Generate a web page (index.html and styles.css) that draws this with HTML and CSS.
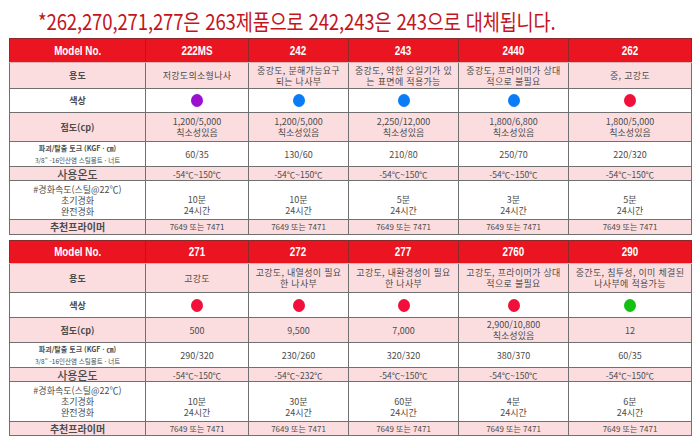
FILE: index.html
```html
<!DOCTYPE html>
<html lang="ko">
<head>
<meta charset="utf-8">
<link rel="stylesheet" href="styles.css">
</head>
<body>
<div class="page">
  <div class="title"><span class="title-text">*262,270,271,277은 263제품으로 242,243은 243으로 대체됩니다.</span></div>

  <table class="spec">
    <colgroup>
      <col class="c1"><col class="c2"><col class="c3"><col class="c4"><col class="c5"><col class="c6">
    </colgroup>
    <tr class="r-head">
      <th><span class="cond">Model No.</span></th>
      <th><span class="cond">222MS</span></th>
      <th><span class="cond">242</span></th>
      <th><span class="cond">243</span></th>
      <th><span class="cond">2440</span></th>
      <th><span class="cond">262</span></th>
    </tr>
    <tr class="r-use pink">
      <td class="lab">용도</td>
      <td>저강도의소형나사</td>
      <td>중강도, 분해가능요구<br>되는 나사부</td>
      <td>중강도, 약한 오일기가 있<br>는 표면에 적용가능</td>
      <td>중강도, 프라이머가 상대<br>적으로 불필요</td>
      <td>중, 고강도</td>
    </tr>
    <tr class="r-color">
      <td class="lab">색상</td>
      <td><span class="dot purple"></span></td>
      <td><span class="dot blue"></span></td>
      <td><span class="dot blue"></span></td>
      <td><span class="dot blue"></span></td>
      <td><span class="dot red"></span></td>
    </tr>
    <tr class="r-visc pink">
      <td class="lab lab-visc">점도(cp)</td>
      <td>1,200/5,000<br>칙소성있음</td>
      <td>1,200/5,000<br>칙소성있음</td>
      <td>2,250/12,000<br>칙소성있음</td>
      <td>1,800/6,800<br>칙소성있음</td>
      <td>1,800/5,000<br>칙소성있음</td>
    </tr>
    <tr class="r-torque">
      <td class="lab lab-torque"><span class="t1">파괴/탈출 토크 (KGF · ㎝)</span><br><span class="t2">3/8" -16인산염 스틸볼트 · 너트</span></td>
      <td>60/35</td>
      <td>130/60</td>
      <td>210/80</td>
      <td>250/70</td>
      <td>220/320</td>
    </tr>
    <tr class="r-temp pink">
      <td class="lab lab-temp">사용온도</td>
      <td>-54℃~150℃</td>
      <td>-54℃~150℃</td>
      <td>-54℃~150℃</td>
      <td>-54℃~150℃</td>
      <td>-54℃~150℃</td>
    </tr>
    <tr class="r-cure">
      <td class="lab lab-cure">#경화속도(스틸@22℃)<br>초기경화<br>완전경화</td>
      <td class="cure">10분<br>24시간</td>
      <td class="cure">10분<br>24시간</td>
      <td class="cure">5분<br>24시간</td>
      <td class="cure">3분<br>24시간</td>
      <td class="cure">5분<br>24시간</td>
    </tr>
    <tr class="r-primer pink">
      <td class="lab lab-primer">추천프라이머</td>
      <td>7649 또는 7471</td>
      <td>7649 또는 7471</td>
      <td>7649 또는 7471</td>
      <td>7649 또는 7471</td>
      <td>7649 또는 7471</td>
    </tr>
  </table>

  <table class="spec second">
    <colgroup>
      <col class="c1"><col class="c2"><col class="c3"><col class="c4"><col class="c5"><col class="c6">
    </colgroup>
    <tr class="r-head">
      <th><span class="cond">Model No.</span></th>
      <th><span class="cond">271</span></th>
      <th><span class="cond">272</span></th>
      <th><span class="cond">277</span></th>
      <th><span class="cond">2760</span></th>
      <th><span class="cond">290</span></th>
    </tr>
    <tr class="r-use2 pink">
      <td class="lab">용도</td>
      <td>고강도</td>
      <td>고강도, 내열성이 필요<br>한 나사부</td>
      <td>고강도, 내환경성이 필요<br>한 나사부</td>
      <td>고강도, 프라이머가 상대<br>적으로 불필요</td>
      <td>중간도, 침투성, 이미 체결된<br>나사부에 적용가능</td>
    </tr>
    <tr class="r-color2">
      <td class="lab">색상</td>
      <td><span class="dot red"></span></td>
      <td><span class="dot red"></span></td>
      <td><span class="dot red"></span></td>
      <td><span class="dot red"></span></td>
      <td><span class="dot green"></span></td>
    </tr>
    <tr class="r-visc2 pink">
      <td class="lab lab-visc">점도(cp)</td>
      <td>500</td>
      <td>9,500</td>
      <td>7,000</td>
      <td>2,900/10,800<br>칙소성있음</td>
      <td>12</td>
    </tr>
    <tr class="r-torque2">
      <td class="lab lab-torque"><span class="t1">파괴/탈출 토크 (KGF · ㎝)</span><br><span class="t2">3/8" -16인산염 스틸볼트 · 너트</span></td>
      <td>290/320</td>
      <td>230/260</td>
      <td>320/320</td>
      <td>380/370</td>
      <td>60/35</td>
    </tr>
    <tr class="r-temp pink">
      <td class="lab lab-temp">사용온도</td>
      <td>-54℃~150℃</td>
      <td>-54℃~232℃</td>
      <td>-54℃~150℃</td>
      <td>-54℃~150℃</td>
      <td>-54℃~150℃</td>
    </tr>
    <tr class="r-cure2">
      <td class="lab lab-cure">#경화속도(스틸@22℃)<br>초기경화<br>완전경화</td>
      <td class="cure">10분<br>24시간</td>
      <td class="cure">30분<br>24시간</td>
      <td class="cure">60분<br>24시간</td>
      <td class="cure">4분<br>24시간</td>
      <td class="cure">6분<br>24시간</td>
    </tr>
    <tr class="r-primer2 pink">
      <td class="lab lab-primer">추천프라이머</td>
      <td>7649 또는 7471</td>
      <td>7649 또는 7471</td>
      <td>7649 또는 7471</td>
      <td>7649 또는 7471</td>
      <td>7649 또는 7471</td>
    </tr>
  </table>
</div>
</body>
</html>
```

FILE: styles.css
```css
html, body {
  margin: 0;
  padding: 0;
  background: #ffffff;
}

.page {
  width: 700px;
  height: 446px;
  padding: 0 0 0 9px;
  box-sizing: border-box;
  overflow: hidden;
  font-family: "Noto Sans CJK KR", "Noto Sans", sans-serif;
}

.title {
  height: 38px;
  padding: 8px 0 0 29px;
  box-sizing: border-box;
}

.title-text {
  display: inline-block;
  font-family: "Noto Sans CJK KR", sans-serif;
  font-size: 22px;
  line-height: 24px;
  color: #c4141c;
  white-space: nowrap;
  transform: scaleX(0.845);
  transform-origin: 0 0;
  letter-spacing: -0.2px;
}

.spec {
  border-collapse: collapse;
  table-layout: fixed;
  width: 682px;
  border: 1px solid #3c3c3c;
}

.spec.second {
  margin-top: 5px;
}

.c1 { width: 136px; }
.c2 { width: 103px; }
.c3 { width: 100px; }
.c4 { width: 110px; }
.c5 { width: 110px; }
.c6 { width: 123px; }

.spec th,
.spec td {
  padding: 0;
  text-align: center;
  vertical-align: middle;
  border: 1px solid #707070;
  white-space: nowrap;
  overflow: hidden;
}

.spec th {
  background: #ea1520;
  color: #ffffff;
  font-family: "Liberation Sans", Arial, sans-serif;
  font-weight: bold;
  font-size: 12px;
  line-height: 14px;
  border-color: #8a2a2a;
  border-bottom-color: #e0b0b3;
}

.cond {
  display: inline-block;
  transform: scaleX(0.82);
}

.spec td {
  color: #4c4c4c;
  font-size: 9px;
  line-height: 11px;
}

.r-use td,
.r-use2 td {
  letter-spacing: 0.3px;
}

.pink td {
  background: #fbdde0;
}

.lab {
  color: #333333;
  font-weight: bold;
}

.lab-visc {
  font-size: 10px;
}

.lab-torque {
  line-height: 8px;
}

.lab-torque .t1 {
  font-size: 7px;
}

.lab-torque .t2 {
  font-size: 6.5px;
  font-weight: normal;
}

.lab-cure {
  font-size: 8px;
  font-weight: normal;
  line-height: 11px;
  color: #3a3a3a;
}

.lab-primer {
  font-size: 10px;
}

.cure {
  padding-top: 10px !important;
  font-size: 8.5px;
}

.r-primer td,
.r-primer2 td {
  font-size: 8px;
  line-height: 10px;
}

.r-primer .lab,
.r-primer2 .lab {
  font-size: 10px;
}

.r-temp td {
  font-size: 8.5px;
  line-height: 10px;
}

.r-temp .lab {
  font-size: 11px;
  font-weight: 500;
  line-height: 12px;
}

.dot {
  display: inline-block;
  width: 12px;
  height: 13px;
  border-radius: 50%;
  vertical-align: middle;
}

.purple { background: #9a0fd0; }
.blue { background: #0a7cf5; }
.red { background: #f0103a; }
.green { background: #14c014; }

/* row heights, table 1 */
.spec:not(.second) .r-head { height: 24px; }
.r-use { height: 26px; }
.r-color { height: 24px; }
.r-visc { height: 29px; }
.r-torque { height: 21px; }
.r-temp { height: 14px; }
.r-cure { height: 39px; }
.r-primer { height: 15px; }

/* row heights, table 2 */
.second .r-head { height: 23px; }
.r-use2 { height: 29px; }
.r-color2 { height: 25px; }
.r-visc2 { height: 25px; }
.r-torque2 { height: 25px; }
.r-cure2 { height: 40px; }
.r-primer2 { height: 14px; }
```
